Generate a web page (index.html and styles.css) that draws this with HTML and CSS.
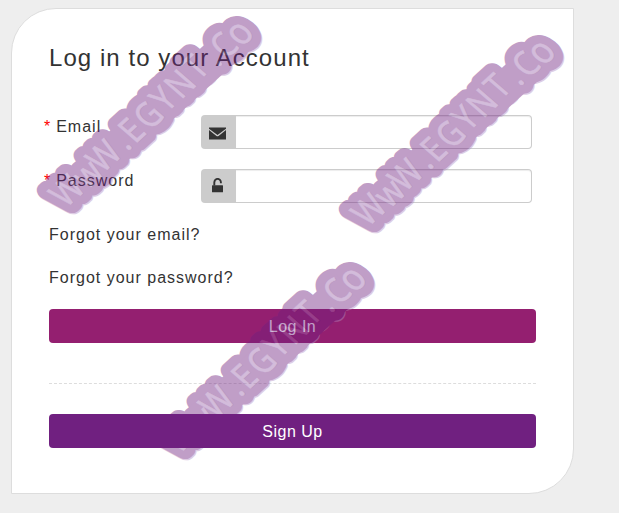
FILE: index.html
```
<!DOCTYPE html>
<html lang="en">
<head>
    <meta charset="UTF-8">
    <meta name="viewport" content="width=device-width, initial-scale=1.0">
    <title>Log in to your Account</title>
    <link rel="stylesheet" href="styles.css">
</head>
<body>
    <div class="login-box">
        <h1>Log in to your Account</h1>
        <form>
            <div class="form-row">
                <label for="email"><span class="required">*</span> Email</label>
                <div class="input-group">
                    <span class="addon">
                        <svg width="17" height="13" viewBox="0 0 17 13"><path d="M0 0.6H17V1.8L8.5 8L0 1.8ZM0 3L7.5 8.9Q8.5 9.6 9.5 8.9L17 3V12.2Q17 12.6 16.6 12.6H0.4Q0 12.6 0 12.2Z"/></svg>
                    </span>
                    <input type="text" id="email">
                </div>
            </div>
            <div class="form-row">
                <label for="password"><span class="required">*</span> Password</label>
                <div class="input-group">
                    <span class="addon">
                        <svg class="lock" width="11" height="15" viewBox="0 0 11 15"><path d="M2.3 7.5V4.4A3.2 3.4 0 0 1 8.9 4.4V5.2" fill="none" stroke="#333" stroke-width="1.9"/><rect x="0" y="7.2" width="11" height="7" rx="0.5"/></svg>
                    </span>
                    <input type="password" id="password">
                </div>
            </div>
            <a class="forgot" href="#">Forgot your email?</a>
            <a class="forgot" href="#">Forgot your password?</a>
            <button type="button" class="button login">Log In</button>
            <hr>
            <button type="button" class="button signup">Sign Up</button>
        </form>
    </div>

    <svg class="watermark" width="619" height="513" viewBox="0 0 619 513">
        <defs>
            <g id="letters" transform="skewX(7) scale(0.85 1)">
                <text text-anchor="middle" x="0 31 60 87 104.5 131 157 183.5 210.5 232 252 275" y="13 14 12 12 12 12 10 10 8 11 11 12">WwW.EGYNT.C<tspan class="big-o">o</tspan></text>
            </g>
            <g id="stamp" transform="rotate(-42.3)">
                <use href="#letters" class="rim" x="0" y="1.5"/>
                <use href="#letters" class="outline"/>
                <path class="spine" d="M0 2H225"/>
                <use href="#letters" class="shade" x="1" y="1"/>
                <use href="#letters" class="face"/>
            </g>
        </defs>
        <g class="stamp" transform="translate(66.5 190.5)"><use href="#stamp"/></g>
        <g class="stamp" transform="translate(368.5 209.5)"><use href="#stamp"/></g>
        <g class="stamp" transform="translate(179.5 436.5)"><use href="#stamp"/></g>
    </svg>
</body>
</html>
```
FILE: styles.css
```
* {
    box-sizing: border-box;
}
body {
    margin: 0;
    padding: 8px 11px;
    height: 513px;
    overflow: hidden;
    background: #eee;
    color: #333;
    font-family: "Liberation Sans", Arial, sans-serif;
    font-size: 16px;
    letter-spacing: 1px;
}
.login-box {
    width: 563px;
    height: 486px;
    padding: 35px 37px 0;
    background: #fff;
    border: 1px solid #ddd;
    border-radius: 45px 0;
}
h1 {
    margin: 0 0 43px;
    font-size: 24px;
    font-weight: normal;
    line-height: 28px;
    letter-spacing: 1.06px;
}
.form-row {
    display: flex;
    margin: 0 4px 20px -5px;
}
label {
    width: 157px;
    line-height: 24px;
}
.required {
    margin-right: -0.5px;
    color: #f00;
}
.input-group {
    display: flex;
    flex: 1;
    height: 34px;
}
.addon {
    display: flex;
    align-items: center;
    justify-content: center;
    width: 35px;
    padding-right: 2px;
    padding-top: 2px;
    background: #ccc;
    border-radius: 4px 0 0 4px;
    fill: #333;
}
.lock {
    margin-top: -3px;
}
input {
    flex: 1;
    min-width: 0;
    padding: 6px 12px;
    border: 1px solid #ccc;
    border-left: 0;
    border-radius: 0 4px 4px 0;
    box-shadow: inset 0 1px 1px rgba(0,0,0,0.075);
}
.forgot {
    display: block;
    margin-bottom: 19px;
    line-height: 24px;
    color: #333;
    text-decoration: none;
}
.button {
    display: block;
    width: 100%;
    height: 34px;
    padding: 1px 0 0;
    border: none;
    border-radius: 4px;
    color: #fff;
    font: inherit;
    letter-spacing: 0.5px;
    cursor: pointer;
}
.login {
    background: #941f70;
}
hr {
    margin: 40px 0 30px;
    border: 0;
    border-top: 1px dashed #ddd;
}
.signup {
    position: relative;
    z-index: 2;
    background: #702080;
}
.watermark {
    position: absolute;
    top: 0;
    left: 0;
    z-index: 1;
    pointer-events: none;
    font-family: "Noto Sans", sans-serif;
    font-size: 36px;
    letter-spacing: 0;
}
.stamp {
    opacity: 0.43;
}
.big-o {
    font-size: 39px;
}
.rim {
    fill: #b58cc2;
    stroke: #b58cc2;
    stroke-width: 20px;
    stroke-linejoin: round;
}
.outline {
    fill: #702080;
    stroke: #702080;
    stroke-width: 20px;
    stroke-linejoin: round;
}
.spine {
    fill: none;
    stroke: #702080;
    stroke-width: 34px;
}
.shade {
    fill: #5d1570;
}
.face {
    fill: #9b66ac;
    stroke: #9b66ac;
    stroke-width: 0.6px;
}
```
